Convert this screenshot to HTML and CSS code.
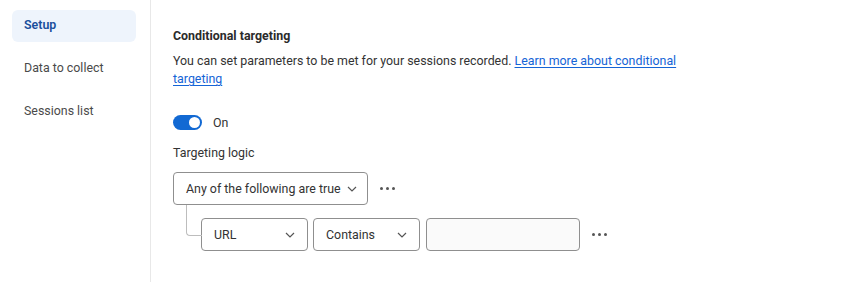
FILE: index.html
```html
<!DOCTYPE html>
<html lang="en">
<head>
    <meta charset="UTF-8">
    <meta name="viewport" content="width=device-width, initial-scale=1.0">
    <title>Session replay setup</title>
    <link rel="stylesheet" href="styles.css">
</head>
<body>
    <aside class="sidebar">
        <a href="#" class="nav-item active">Setup</a>
        <a href="#" class="nav-item">Data to collect</a>
        <a href="#" class="nav-item">Sessions list</a>
    </aside>
    <main class="content">
        <h2 class="section-title">Conditional targeting</h2>
        <p class="section-text">You can set parameters to be met for your sessions recorded. <a href="#" class="learn-link">Learn more about conditional targeting</a></p>

        <div class="toggle-row">
            <span class="toggle"><span class="knob"></span></span>
            <span class="toggle-label">On</span>
        </div>

        <div class="field-label">Targeting logic</div>
        <div class="logic-row">
            <button class="select select-logic">Any of the following are true
                <svg class="chevron" width="10" height="6" viewBox="0 0 10 6"><path d="M1 1l4 4 4-4" fill="none" stroke="#555" stroke-width="1.2"/></svg>
            </button>
            <span class="more"><i></i><i></i><i></i></span>
        </div>
        <div class="condition-row">
            <button class="select select-short">URL
                <svg class="chevron" width="10" height="6" viewBox="0 0 10 6"><path d="M1 1l4 4 4-4" fill="none" stroke="#555" stroke-width="1.2"/></svg>
            </button>
            <button class="select select-short">Contains
                <svg class="chevron" width="10" height="6" viewBox="0 0 10 6"><path d="M1 1l4 4 4-4" fill="none" stroke="#555" stroke-width="1.2"/></svg>
            </button>
            <input class="text-input" type="text">
            <span class="more"><i></i><i></i><i></i></span>
        </div>
    </main>
</body>
</html>
```

FILE: styles.css
```css
* {
    margin: 0;
    padding: 0;
    box-sizing: border-box;
}

body {
    font-family: 'Roboto', 'Liberation Sans', sans-serif;
    font-size: 12.4px;
    color: #333;
    background: #fff;
    display: flex;
    min-height: 100vh;
}

.sidebar {
    width: 151px;
    border-right: 1px solid #e8e8e8;
    padding: 10px 14px 0 12px;
    display: flex;
    flex-direction: column;
    gap: 11px;
}

.nav-item {
    height: 32px;
    display: flex;
    align-items: center;
    padding: 0 0 4px 12px;
    border-radius: 6px;
    color: #4a4a4a;
    text-decoration: none;
}

.nav-item.active {
    background: #eef4fc;
    color: #1a4f9c;
    font-weight: 600;
}

.content {
    flex: 1;
    padding: 27px 0 0 22px;
}

.section-title {
    font-size: 12.4px;
    font-weight: 700;
    line-height: 18px;
    color: #2b2b2b;
}

.section-text {
    margin-top: 7px;
    max-width: 515px;
    line-height: 18px;
    color: #333;
}

.learn-link {
    color: #1564d6;
    text-decoration: underline;
    text-underline-offset: 2px;
}

.toggle-row {
    margin-top: 25px;
    height: 18px;
    display: flex;
    align-items: center;
    gap: 11px;
}

.toggle {
    width: 29px;
    height: 15px;
    border-radius: 8px;
    background: #1269d3;
    display: flex;
    align-items: center;
    justify-content: flex-end;
    padding-right: 2px;
}

.knob {
    width: 11px;
    height: 11px;
    border-radius: 50%;
    background: #fff;
}

.field-label {
    margin-top: 13px;
    line-height: 18px;
    color: #333;
}

.logic-row {
    margin-top: 10px;
    display: flex;
    align-items: center;
}

.select {
    height: 33px;
    border: 1px solid #8f8f8f;
    border-radius: 4px;
    background: #fff;
    font: inherit;
    color: #333;
    display: flex;
    align-items: center;
    justify-content: space-between;
    padding: 0 12px;
    gap: 8px;
    white-space: nowrap;
}

.select-logic {
    min-width: 194px;
    padding-right: 10px;
    gap: 6px;
}

.select-short {
    width: 107px;
}

.chevron {
    flex-shrink: 0;
}

.more {
    display: flex;
    gap: 3px;
    margin-left: 12px;
}

.more i {
    width: 3px;
    height: 3px;
    border-radius: 50%;
    background: #555;
}

.condition-row {
    position: relative;
    margin-top: 13px;
    padding-left: 28px;
    display: flex;
    align-items: center;
    gap: 5px;
}

.condition-row::before {
    content: "";
    position: absolute;
    left: 13px;
    top: -13px;
    width: 15px;
    height: 30px;
    border-left: 1px solid #bdbdbd;
    border-bottom: 1px solid #bdbdbd;
    border-bottom-left-radius: 4px;
}

.text-input {
    width: 154px;
    height: 33px;
    border: 1px solid #8f8f8f;
    border-radius: 4px;
    background: #fafafa;
    font: inherit;
    margin-left: 1px;
}

.condition-row .more {
    margin-left: 7px;
}
```
